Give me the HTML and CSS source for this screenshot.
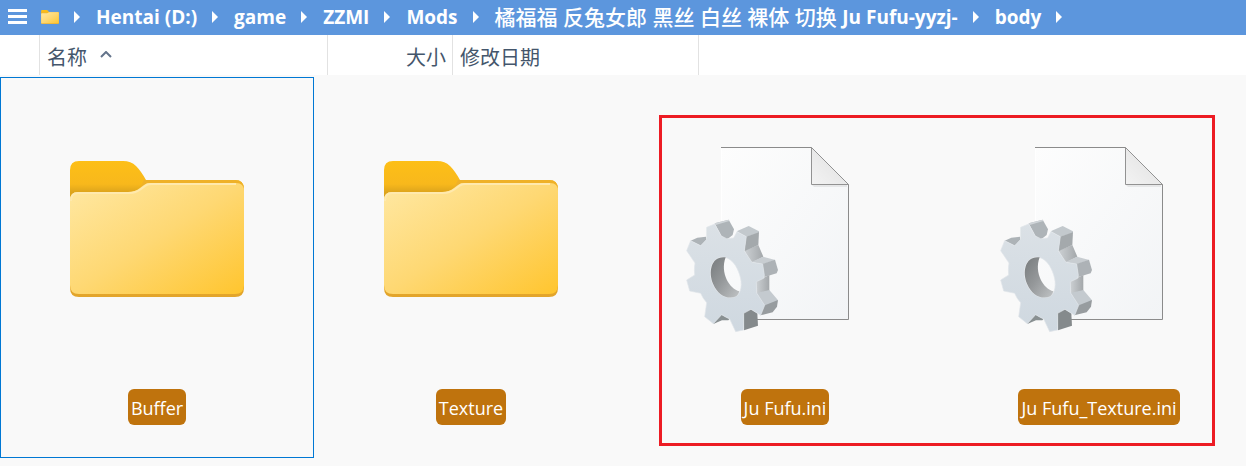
FILE: index.html
```
<!DOCTYPE html>
<html lang="zh-CN">
<head>
  <meta charset="UTF-8">
  <meta name="viewport" content="width=device-width, initial-scale=1.0">
  <title>body</title>
  <link rel="stylesheet" href="styles.css">
</head>
<body>
  <!-- Shared icons -->
  <svg class="sprite" width="0" height="0" aria-hidden="true">
    <defs>
      <linearGradient id="folderFront" x1="0" y1="0" x2="1" y2="1">
        <stop offset="0" stop-color="#ffe8a3"/>
        <stop offset=".5" stop-color="#fed873"/>
        <stop offset="1" stop-color="#ffc52e"/>
      </linearGradient>
      <linearGradient id="folderBack" x1="0" y1="0" x2="0" y2="1">
        <stop offset="0" stop-color="#fdbf17"/>
        <stop offset=".17" stop-color="#f8b81c"/>
        <stop offset=".23" stop-color="#dda41c"/>
        <stop offset="1" stop-color="#e3a52b"/>
      </linearGradient>
      <linearGradient id="pageFill" x1="0" y1="0" x2="1" y2="1">
        <stop offset="0" stop-color="#fdfdfd"/>
        <stop offset="1" stop-color="#f2f4f6"/>
      </linearGradient>
      <linearGradient id="foldFill" x1="0" y1="1" x2="1" y2="0">
        <stop offset="0" stop-color="#f3f3f3"/>
        <stop offset="1" stop-color="#dedede"/>
      </linearGradient>
      <linearGradient id="gearFace" x1="0" y1="0" x2="0" y2="1">
        <stop offset="0" stop-color="#dbe1e6"/>
        <stop offset="1" stop-color="#cfd8e0"/>
      </linearGradient>
      <linearGradient id="gearHole" x1="0" y1="0" x2="1" y2="1">
        <stop offset="0" stop-color="#777b7d"/>
        <stop offset=".5" stop-color="#96999b"/>
        <stop offset="1" stop-color="#c0c3c5"/>
      </linearGradient>
      <linearGradient id="gearValley" x1="0" y1="0" x2="1" y2="0">
        <stop offset="0" stop-color="#cdd1d4"/>
        <stop offset="1" stop-color="#a3a7aa"/>
      </linearGradient>

      <symbol id="folder" viewBox="13 27 174 137">
        <path fill="url(#folderBack)" d="M13 36Q13 27 22 27H66Q74 27 79 32Q84 37 89 46H178Q187 46 187 55V154Q187 163 178 163H22Q13 163 13 154Z"/>
        <path fill="#efb128" d="M87 46H178Q187 46 187 55V60H80Z"/>
        <path fill="url(#folderFront)" d="M13 66Q13 58 21 58H71Q78 58 83 54L87 51Q89 49 93 49H179Q187 49 187 57V151Q187 160 178 160H22Q13 160 13 151Z"/>
        <path fill="none" stroke="#ffe9ad" stroke-width="2" d="M14 67Q14 59 21 59H72Q79 59 84 55L88 52Q90 50 94 50H179"/>
      </symbol>

      <symbol id="ini" viewBox="0 0 200 200">
        <path fill="url(#pageFill)" d="M36 13H127L164 50V186H36Z"/>
        <path fill="none" stroke="#fff" d="M36.500 14V186"/>
        <path fill="none" stroke="#8b8b8b" d="M36 13.500H126.500L163.500 50.500V185.500H70"/>
        <path fill="#e6e7e8" d="M127 51H162V53H129Z"/>
        <path fill="url(#foldFill)" stroke="#929292" d="M126.500 13.500V50.500H163.500Z"/>
        <g transform="translate(-5 76) scale(.3333)">
          <path fill="#aeb4b8" d="M104 40L146 29L162 58L158 75L140 89L124 78Z"/>
          <path fill="#d0d5d9" d="M104 40L146 29L148 33L107 45Z"/>
          <path fill="#adb3b7" d="M32 92L52 83L78 80L80 92L62 107Z"/>
          <path fill="url(#gearValley)" d="M193 122L235 105L250 140L215 158Z"/>
          <path fill="url(#gearValley)" d="M228 214L268 195L268 242L230 251Z"/>
          <path fill="#c3c9cd" d="M170 64L206 48L237 64L237 69L199 80Z"/>
          <path fill="#a4a9ac" d="M198 80L237 67L235 105L193 124Z"/>
          <path fill="#c8cdd1" d="M214 156L249 140L286 150L249 163Z"/>
          <path fill="#adb2b6" d="M247 162L285 149L294 180L290 190L253 201Z"/>
          <path fill="#c4cacf" d="M230 249L268 240L293 269L292 275L253 288Z"/>
          <path fill="#979c9f" d="M251 287L294 270L291 290L278 307L241 316Z"/>
          <path fill="#858a8c" d="M190 307L213 298L232 310L234 347L192 361Z"/>
          <path fill="#899092" d="M100 342L105 322L125 314L149 326L145 331L126 331Z"/>
          <path fill="url(#gearFace)" stroke="#e1e6ea" stroke-width="2" fill-rule="evenodd" d="M80 52L104 42L124 78L140 86L161 84L171 65L199 80L193 123L216 157L248 162L253 195L251 205L229 215L230 249L254 286L242 316L213 298L191 310L191 360L167 365L149 327Q136 321 125 314L100 341L74 320L80 278Q68 265 62 250L29 243L20 210L44 195Q42 177 45 159L20 122L32 92L62 107L80 88ZM130 141C94 141 82 184 98 221C113 257 144 270 169 259C188 244 187 211 175 184C166 160 149 143 130 141Z"/>
          <path fill="url(#gearHole)" d="M137 142C94 136 84 185 99 221C114 257 144 270 169 259Q176 254 178 244C150 238 119 190 137 142Z"/>
        </g>
      </symbol>
    </defs>
  </svg>

  <header class="path-bar">
    <button class="menu-btn" type="button" aria-label="Menu">
      <span></span>
      <span></span>
      <span></span>
    </button>
    <svg class="path-icon" aria-hidden="true"><use href="#folder"/></svg>
    <nav class="crumbs">
      <a href="#">Hentai (D:)</a>
      <a href="#">game</a>
      <a href="#">ZZMI</a>
      <a href="#">Mods</a>
      <a href="#"><span class="cjk">橘福福 反兔女郎 黑丝 白丝 裸体 切换 </span>Ju Fufu-yyzj-</a>
      <a href="#">body</a>
    </nav>
  </header>

  <div class="columns">
    <span class="col"></span>
    <button class="col" type="button">名称
      <svg class="sort" width="12" height="8" viewBox="0 0 12 8" aria-hidden="true"><path d="M1 6L6 1L11 6"/></svg>
    </button>
    <button class="col col-size" type="button">大小</button>
    <button class="col" type="button">修改日期</button>
  </div>

  <main class="files">
    <button class="tile selected" type="button">
      <span class="thumb"><svg class="folder"><use href="#folder"/></svg></span>
      <span class="name">Buffer</span>
    </button>
    <button class="tile" type="button">
      <span class="thumb"><svg class="folder"><use href="#folder"/></svg></span>
      <span class="name">Texture</span>
    </button>
    <div class="marked">
      <button class="tile" type="button">
        <span class="thumb"><svg class="ini"><use href="#ini"/></svg></span>
        <span class="name">Ju Fufu.ini</span>
      </button>
      <button class="tile" type="button">
        <span class="thumb"><svg class="ini"><use href="#ini"/></svg></span>
        <span class="name">Ju Fufu_Texture.ini</span>
      </button>
    </div>
  </main>
</body>
</html>
```
FILE: styles.css
```
:root {
  --bar-color: #5c96dd;
  --label-color: #bf730d;
  --text-color: #44566c;
  --line-color: #e2e2e2;
  --select-color: #0078d4;
  --mark-color: #ed1c24;
  --tile: 314px;
}

* {
  margin: 0;
  padding: 0;
  box-sizing: border-box;
}

body {
  font-family: "Open Sans", "Noto Sans CJK SC", sans-serif;
  font-size: 18px;
  background-color: #f9f9f9;
  min-height: 100vh;
  overflow: hidden;
}

button {
  font: inherit;
  color: inherit;
  background: none;
  border: none;
}

.sprite {
  position: absolute;
}

/* Path bar */
.path-bar {
  display: flex;
  align-items: center;
  height: 35px;
  padding: 0 8px 2px;
  background-color: var(--bar-color);
  color: #fff;
}

.menu-btn {
  display: flex;
  flex-direction: column;
  gap: 3px;
  width: 19px;
  margin-right: 14px;
}

.menu-btn span {
  height: 3px;
  background-color: #fff;
}

.path-icon {
  width: 18px;
  height: 14px;
  margin-right: 15px;
}

.crumbs {
  display: flex;
  align-items: center;
  font-size: 19px;
  white-space: nowrap;
}

.crumbs a {
  display: flex;
  align-items: center;
  color: inherit;
  font-weight: 700;
  line-height: 32px;
  text-decoration: none;
  white-space: pre;
}

.crumbs a::before,
.crumbs a:last-child::after {
  content: "";
  border-left: 6px solid #fff;
  border-top: 6px solid transparent;
  border-bottom: 6px solid transparent;
  margin-right: 16px;
}

.crumbs a + a::before,
.crumbs a:last-child::after {
  margin-left: 15px;
}

.crumbs .cjk {
  font-size: 21px;
  font-weight: 500;
}

/* Column headers */
.columns {
  display: grid;
  grid-template-columns: 40px 288px 125px 246px;
  height: 40px;
  background-color: #fff;
  color: var(--text-color);
  font-size: 20px;
}

.col {
  display: flex;
  align-items: center;
  gap: 13px;
  padding: 2px 7px 0;
  border-right: 1px solid var(--line-color);
  font-family: "Noto Sans CJK SC", sans-serif;
}

.col-size {
  justify-content: flex-end;
  padding-right: 6px;
}

.sort {
  fill: none;
  stroke: #64748b;
  stroke-width: 2;
  margin-bottom: 2px;
}

/* Files */
.files {
  display: flex;
  padding-top: 2px;
}

.tile {
  flex: 0 0 var(--tile);
  display: flex;
  flex-direction: column;
  align-items: center;
  padding: 56px 0 32px;
  border: 1px solid transparent;
}

.tile.selected {
  border-color: var(--select-color);
}

.thumb {
  display: flex;
  align-items: center;
  justify-content: center;
  height: 200px;
  margin-bottom: 55px;
}

.folder {
  width: 174px;
  height: 137px;
  margin-bottom: 9px;
}

.ini {
  width: 200px;
  height: 200px;
}

.name {
  padding: 3px 3px 0;
  border-radius: 6px;
  background-color: var(--label-color);
  color: #fff;
  line-height: 33px;
}

.marked {
  position: relative;
  display: flex;
}

/* Red frame drawn over the two ini files */
.marked::after {
  content: "";
  position: absolute;
  inset: 38px 41px 12px 31px;
  border: 3px solid var(--mark-color);
  pointer-events: none;
}
```
